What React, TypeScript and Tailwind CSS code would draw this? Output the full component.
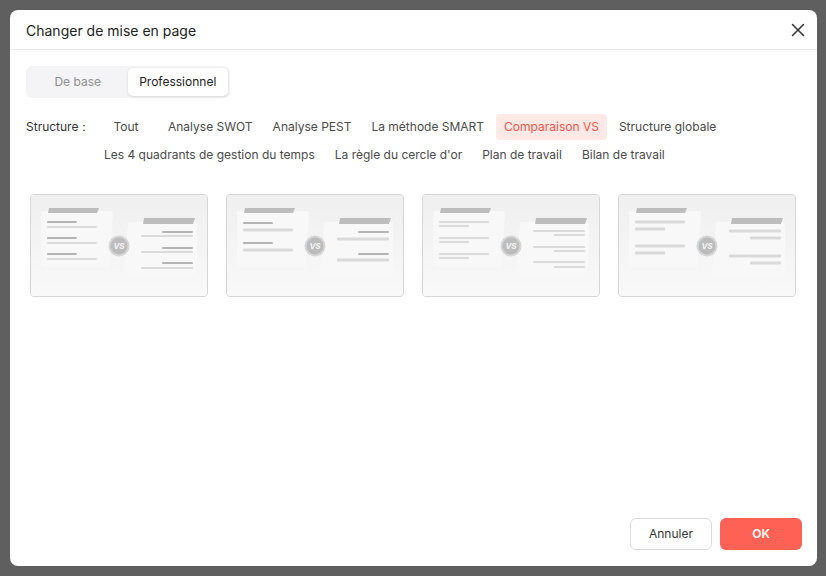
import React from "react";

type Line = { x1: number; x2: number; y: number; dark?: boolean; h?: number };

const cards: { left: Line[]; right: Line[] }[] = [
  {
    left: [
      { x1: 17, x2: 47, y: 28, dark: true },
      { x1: 17, x2: 67, y: 33 },
      { x1: 17, x2: 47, y: 44, dark: true },
      { x1: 17, x2: 67, y: 49 },
      { x1: 17, x2: 47, y: 60, dark: true },
      { x1: 17, x2: 67, y: 65 },
    ],
    right: [
      { x1: 132, x2: 163, y: 38, dark: true },
      { x1: 111, x2: 163, y: 42 },
      { x1: 132, x2: 163, y: 54, dark: true },
      { x1: 111, x2: 163, y: 58 },
      { x1: 132, x2: 163, y: 69, dark: true },
      { x1: 111, x2: 163, y: 74 },
    ],
  },
  {
    left: [
      { x1: 17, x2: 47, y: 29, dark: true },
      { x1: 17, x2: 67, y: 36, h: 3 },
      { x1: 17, x2: 47, y: 49, dark: true },
      { x1: 17, x2: 67, y: 56, h: 3 },
    ],
    right: [
      { x1: 132, x2: 163, y: 38, dark: true },
      { x1: 111, x2: 163, y: 45, h: 3 },
      { x1: 132, x2: 163, y: 60, dark: true },
      { x1: 111, x2: 163, y: 66, h: 3 },
    ],
  },
  {
    left: [
      { x1: 17, x2: 67, y: 28 },
      { x1: 17, x2: 47, y: 32 },
      { x1: 17, x2: 67, y: 44 },
      { x1: 17, x2: 47, y: 48 },
      { x1: 17, x2: 67, y: 60 },
      { x1: 17, x2: 47, y: 64 },
    ],
    right: [
      { x1: 111, x2: 163, y: 37 },
      { x1: 132, x2: 163, y: 41 },
      { x1: 111, x2: 163, y: 53 },
      { x1: 132, x2: 163, y: 57 },
      { x1: 111, x2: 163, y: 68 },
      { x1: 132, x2: 163, y: 73 },
    ],
  },
  {
    left: [
      { x1: 17, x2: 67, y: 28, h: 3 },
      { x1: 17, x2: 47, y: 35, h: 3 },
      { x1: 17, x2: 67, y: 52, h: 3 },
      { x1: 17, x2: 47, y: 59, h: 3 },
    ],
    right: [
      { x1: 111, x2: 163, y: 37, h: 3 },
      { x1: 132, x2: 163, y: 44, h: 3 },
      { x1: 111, x2: 163, y: 62, h: 3 },
      { x1: 132, x2: 163, y: 69, h: 3 },
    ],
  },
];

function Preview({ left, right }: { left: Line[]; right: Line[] }) {
  const line = (l: Line, i: number) => (
    <rect
      key={i}
      x={l.x1}
      y={l.y - (l.h ?? 2) / 2}
      width={l.x2 - l.x1}
      height={l.h ?? 2}
      rx={1}
      fill={l.dark ? "#b4b4b4" : "#dadada"}
    />
  );
  return (
    <svg width="176" height="101" viewBox="1 1 176 101" className="block">
      <defs>
        <linearGradient id="bgG" x1="0" y1="0" x2="0" y2="1">
          <stop offset="0" stopColor="#efefef" />
          <stop offset="1" stopColor="#f9f9f9" />
        </linearGradient>
      </defs>
      <rect x="0" y="0" width="178" height="103" fill="url(#bgG)" />
      <path d="M11 19 Q11 17 13 17 L81 17 Q83 17 83 19 L80 71 Q80 73 78 73 L13 73 Q11 73 11 71 Z" fill="#f8f8f8" />
      <path d="M19 14 L69 14 L67 19 L18 19 Z" fill="#bdbdbd" />
      {left.map(line)}
      <path d="M98 30 Q98 28 100 28 L165 28 Q167 28 167 30 L167 79 Q167 81 165 81 L96 81 Q94 81 94 79 Z" fill="#f8f8f8" />
      <path d="M114 24 L165 24 L163 30 L113 30 Z" fill="#bdbdbd" />
      {right.map(line)}
      <circle cx="89" cy="52" r="10.5" fill="#d6d6d6" />
      <circle cx="89" cy="52" r="8.5" fill="#bcbcbc" />
      <text x="89" y="55" textAnchor="middle" fontSize="8" fontWeight="700" fontStyle="italic" fill="#f4f4f4" fontFamily="Inter, sans-serif">VS</text>
    </svg>
  );
}

const row1 = ["Analyse SWOT", "Analyse PEST", "La méthode SMART", "Comparaison VS", "Structure globale"];
const row2 = ["Les 4 quadrants de gestion du temps", "La règle du cercle d'or", "Plan de travail", "Bilan de travail"];

function Item({ label }: { label: string }) {
  const active = label === "Comparaison VS";
  return (
    <div
      className={
        "h-[26px] px-2 flex items-center rounded-[4px] text-[12px] whitespace-nowrap " +
        (active ? "bg-[#ffe9e6] text-[#f4574a]" : "text-[#4a4a4a]")
      }
    >
      {label}
    </div>
  );
}

export default function App() {
  return (
    <div
      className="w-[826px] h-[576px] bg-[#5f5f5f] pt-[10px] pl-[10px] overflow-hidden"
      style={{ fontFamily: "Inter, 'Noto Sans', sans-serif" }}
    >
      <div className="w-[807px] h-[556px] bg-white rounded-[8px] flex flex-col">
        <div className="h-[40px] border-b border-[#ececec] flex items-center justify-between pl-4 pr-[12px]">
          <div className="text-[14px] text-[#222] pt-[1px]">Changer de mise en page</div>
          <svg width="14" height="14" viewBox="0 0 14 14" className="mt-[1px]">
            <path d="M1.5 1.5 L12.5 12.5 M12.5 1.5 L1.5 12.5" stroke="#333" strokeWidth="1.5" strokeLinecap="round" />
          </svg>
        </div>
        <div className="px-4 pt-4 flex-1 flex flex-col">
          <div className="w-[204px] h-[32px] bg-[#f4f4f6] rounded-[6px] p-[2px] flex">
            <div className="w-[100px] flex items-center justify-center text-[12px] text-[#8f8f8f]">De base</div>
            <div className="w-[101px] flex items-center justify-center text-[12px] text-[#222] bg-white rounded-[5px] shadow-[0_1px_3px_rgba(0,0,0,0.12)]">
              Professionnel
            </div>
          </div>
          <div className="flex mt-[16px]">
            <div className="w-[70px] h-[26px] flex items-center text-[12px] text-[#333] whitespace-nowrap">Structure：</div>
            <div className="flex flex-col gap-y-[2px]">
              <div className="flex gap-1">
                <div className="w-[60px] h-[26px] flex items-center justify-center text-[12px] text-[#4a4a4a]">Tout</div>
                {row1.map((l) => (
                  <Item key={l} label={l} />
                ))}
              </div>
              <div className="flex gap-1">
                {row2.map((l) => (
                  <Item key={l} label={l} />
                ))}
              </div>
            </div>
          </div>
          <div className="flex gap-[18px] mt-[26px] pl-1">
            {cards.map((c, i) => (
              <div key={i} className="w-[178px] h-[103px] border border-[#d6d6d6] rounded-[4px] overflow-hidden">
                <Preview left={c.left} right={c.right} />
              </div>
            ))}
          </div>
          <div className="flex-1" />
          <div className="flex justify-end gap-2 pb-4 -mr-[1px]">
            <button className="w-[82px] h-[32px] border border-[#dcdcdc] rounded-[6px] text-[12px] text-[#333] bg-white">
              Annuler
            </button>
            <button className="w-[82px] h-[32px] rounded-[6px] text-[12px] font-semibold text-white bg-[#ff6154]">OK</button>
          </div>
        </div>
      </div>
    </div>
  );
}
